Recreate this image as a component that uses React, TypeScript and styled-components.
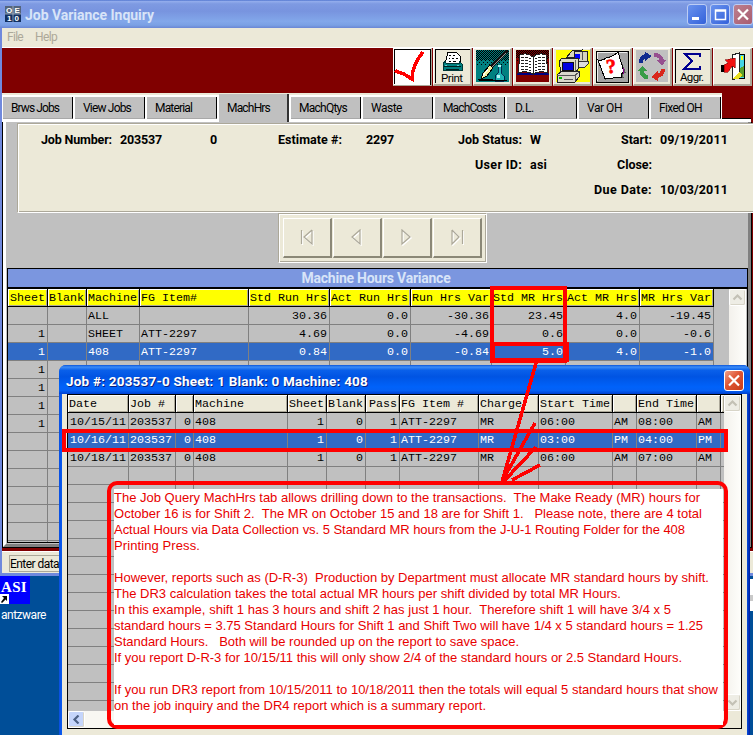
import React, { useLayoutEffect, useRef, useState } from "react";
import styled, { createGlobalStyle, css } from "styled-components";

const BEIGE = "#ece9d8";
const SILVER = "#c0c0c0";
const MAROON = "#800000";

const GlobalStyle = createGlobalStyle`
  * { box-sizing: border-box; }
  body { margin: 0; overflow: hidden; font-family: Roboto, "Liberation Sans", Arial, sans-serif; font-size: 12px; color: #000; }
`;

/* Text whose tracking is adjusted so that it fills a known width */
const FitSpan = styled.span`
  display: inline-block;
  white-space: pre;
`;
function Fit({ w, children }: { w: number; children: string }) {
  const ref = useRef<HTMLSpanElement>(null);
  const [spacing, setSpacing] = useState(0);
  useLayoutEffect(() => {
    const el = ref.current;
    if (!el) return;
    el.style.letterSpacing = "0px";
    setSpacing((w - el.getBoundingClientRect().width) / children.length);
  }, [w, children]);
  return <FitSpan ref={ref} style={{ letterSpacing: `${spacing}px` }}>{children}</FitSpan>;
}

const Desktop = styled.div`
  position: relative;
  width: 753px;
  height: 735px;
  overflow: hidden;
  background: #004e98;
`;

const MainWindow = styled.div`
  width: 760px;
  height: 576px;
  display: flex;
  flex-direction: column;
  background: ${MAROON};
  border-left: 2px solid #7089dd;
  border-bottom: 3px solid #7089dd;
`;

const TitleBar = styled.div`
  height: 28px;
  flex: none;
  margin-left: -2px;
  padding: 4px 5px 0 5px;
  display: flex;
  align-items: flex-start;
  background: linear-gradient(#4268c8 0, #94aeed 4%, #7e9ae2 14%, #7894df 40%, #82a7ea 76%, #7aa0e4 90%, #6a86d4 100%);
`;
const TitleGlyph = styled.svg`
  flex: none;
  margin-top: 2px;
`;
const TitleText = styled.div`
  margin: 3px 0 0 4px;
  width: 662px;
  flex: none;
  color: #d8e4f8;
  font: bold 14px/17px Roboto, sans-serif;
`;
const WindowButton = styled.div<{ $tone: "blue" | "muted" | "red" }>`
  width: 20px;
  height: 21px;
  flex: none;
  margin-right: 3px;
  border: 1px solid ${(p) => (p.$tone === "red" ? "#fff" : "#bccdf5")};
  border-radius: 3px;
  background: ${(p) =>
    p.$tone === "blue" ? "linear-gradient(135deg,#6a93ee,#3361da)" : p.$tone === "muted" ? "linear-gradient(135deg,#bd808f,#a85c70)" : "linear-gradient(135deg,#f0a088,#df5533 45%,#c83c18)"};
  svg { display: block; }
`;

const MenuBar = styled.div`
  height: 20px;
  flex: none;
  display: flex;
  gap: 12px;
  padding: 1px 5px;
  background: ${BEIGE};
  border-bottom: 1px solid #fff;
  color: #aca899;
  font-size: 12px;
  line-height: 17px;
`;

const ToolBar = styled.div`
  height: 45px;
  flex: none;
  display: flex;
  gap: 1px;
  padding-left: 391px;
  background: ${MAROON};
`;
const ToolButton = styled.div`
  width: 39px;
  height: 38px;
  flex: none;
  background: ${BEIGE};
  border: solid;
  border-width: 1px 2px 2px 1px;
  border-color: #fff #aca899 #aca899 #fff;
  svg { display: block; margin: -1px; }
`;

const TabRow = styled.div`
  height: 29px;
  flex: none;
  display: flex;
  background: ${MAROON};
`;
const Tabs = styled.div`
  width: 720px;
  display: flex;
  background: #fff;
  border-top: 2px solid ${BEIGE};
  padding: 0 0 0 1px;
`;
const TabRest = styled.div`
  flex: 1;
  align-self: flex-end;
  height: 4px;
  max-width: 29px;
  background: #fff;
  border-top: 1px solid #000;
`;
const Tab = styled.div<{ $active?: boolean }>`
  width: 70px;
  height: 22px;
  margin: 2px 2px 0 0;
  flex: none;
  padding: 4px 0 0 8px;
  line-height: 15px;
  background: ${SILVER};
  border-right: 1px solid #000;
  border-bottom: 1px solid #a8a8a8;
  ${(p) => p.$active && css`
    height: 28px;
    margin-top: -1px;
    padding-top: 7px;
    border-bottom: 0;
    border-right: 2px solid #333;
  `}
`;

const Page = styled.div`
  height: 426px;
  flex: none;
  width: 750px;
  border-left: 1px solid #000;
  border-right: 1px solid #000;
  border-bottom: 1px solid #000;
`;
const PageFace = styled.div`
  height: 425px;
  background: ${SILVER};
  border-left: 3px solid #fff;
  border-right: 3px solid #808080;
  border-bottom: 3px solid #808080;
  padding-top: 1px;
`;
const Form = styled.div`
  width: 745px;
  height: 90px;
  margin-left: 11px;
  position: relative;
  background: ${BEIGE};
  border: 1px solid #aca899;
  border-bottom-color: #fff;
  box-shadow: inset 1px 1px #fff, inset 0 -1px #aca899;
  padding: 3px 0 0 2px;
`;
const FormRow = styled.div`
  display: grid;
  grid-template-columns: 92px 98px 7px 125px 90px 90px 60px 70px 100px;
  height: 25px;
  align-items: center;
  white-space: nowrap;
  font: bold 12.5px Roboto, sans-serif;
`;
const Label = styled.div`
  text-align: right;
`;
const Value = styled.div<{ $inset?: number }>`
  padding-left: ${(p) => p.$inset ?? 8}px;
`;

const Navigator = styled.div`
  width: 209px;
  height: 50px;
  margin: 0 0 0 272px;
  display: flex;
  gap: 1px;
  padding: 4px 4px;
  background: ${BEIGE};
  border: 1px solid #aca899;
  border-right-color: #fff;
  border-bottom-color: #fff;
  box-shadow: inset 1px 1px #fff, inset -1px -1px #aca899;
`;
const NavButton = styled.div`
  width: 49px;
  height: 40px;
  border: solid;
  border-width: 1px 2px 2px 1px;
  border-color: #fff #8b8877 #8b8877 #fff;
  display: grid;
  place-items: center;
`;

const Browse = styled.div`
  width: 741px;
  height: 275px;
  margin: 5px 0 0 1px;
  border: 1px solid #000;
`;
const BrowseTitle = styled.div`
  height: 20px;
  background: #7b96df;
  border-bottom: 2px solid #000;
  text-align: center;
  color: #d8e4f8;
  font: bold 14px/19px Roboto, sans-serif;
  padding-right: 3px;
`;
const Split = styled.div`
  display: flex;
`;
const MainRows = styled.div`
  width: 721px;
  height: 253px;
  overflow: hidden;
`;
const Row = styled.div<{ $cols: string; $selected?: boolean; $head?: string }>`
  display: grid;
  grid-template-columns: ${(p) => p.$cols};
  width: max-content;
  height: 18px;
  color: ${(p) => (p.$selected ? "#fff" : "#000")};
  background: ${(p) => (p.$selected ? "#316ac5" : SILVER)};
  font: 11.667px/18px "Liberation Mono", "Courier New", monospace;
  ${(p) => p.$head && css`background: ${p.$head};`}
`;
const Cell = styled.div<{ $right?: boolean; $head?: boolean; $pad?: number }>`
  padding: 0 2px 0 ${(p) => p.$pad ?? 1}px;
  white-space: pre;
  overflow: hidden;
  text-align: ${(p) => (p.$right ? "right" : "left")};
  border-right: 1px solid #808080;
  border-bottom: 1px solid #808080;
  ${(p) => p.$head && css`
    border-color: #000;
    box-shadow: inset 1px 1px #fff, inset -1px -1px #aca899;
  `}
`;

const Scroll = styled.div<{ $h: number }>`
  width: 17px;
  height: ${(p) => p.$h}px;
  display: flex;
  flex-direction: column;
  justify-content: space-between;
  background: linear-gradient(90deg, #f3f1ec, #fefefb);
`;
const ScrollButton = styled.div<{ $live?: boolean }>`
  width: 17px;
  height: 17px;
  flex: none;
  display: grid;
  place-items: center;
  border: 1px solid #fff;
  border-radius: 2px;
  box-shadow: inset -1px -1px #d8d5c8;
  background: ${(p) => (p.$live ? "#c5d5fb" : "#eeede5")};
`;

const StatusArea = styled.div`
  height: 25px;
  flex: none;
  padding-top: 3px;
  background: ${MAROON};
`;
const StatusBar = styled.div`
  height: 22px;
  padding: 3px 7px 2px;
  background: ${BEIGE};
  border-top: 1px solid #fff;
`;
const StatusBox = styled.div`
  height: 17px;
  width: 300px;
  border: 1px solid #aca899;
  line-height: 16px;
`;

const Shortcut = styled.div`
  height: 28px;
  width: 30px;
  padding-left: 1px;
  background: #0000ff;
  color: #fff;
  font: bold 15px/22px "Liberation Serif", serif;
  svg { display: block; margin: -4px 0 0 -1px; }
`;
const ShortcutLabel = styled.div`
  padding: 4px 0 0 1px;
  color: #fff;
  font-size: 12px;
  line-height: 15px;
`;

const Popup = styled.div`
  position: absolute;
  left: 59px;
  top: 365px;
  width: 691px;
  height: 380px;
  border-radius: 7px 7px 0 0;
  background: linear-gradient(90deg, #0a4fe0, #0a5cf0 3px, #0a5cf0 687px, #001ea0);
`;
const PopupTitle = styled.div`
  height: 29px;
  padding: 5px 2px 0 7px;
  display: flex;
  border-radius: 7px 7px 0 0;
  color: #fff;
  font: bold 13.5px/22px Roboto, sans-serif;
  text-shadow: 1px 1px #0a1f80;
  background: linear-gradient(#0b55d8 0, #3b8cf8 7%, #0a60ea 18%, #0054e3 40%, #0062fa 75%, #0460f5 88%, #0040cf 100%);
`;
const PopupTitleText = styled.div`
  width: 658px;
`;
const PopupBody = styled.div`
  height: 360px;
  margin: 0 3px;
  padding-left: 5px;
  background: ${BEIGE};
`;
const PopupBrowse = styled.div`
  width: 675px;
  height: 335px;
  border: 1px solid #000;
`;
const PopupRows = styled.div`
  width: 656px;
  height: 316px;
  overflow: hidden;
  background: ${SILVER};
`;
const HScroll = styled.div`
  height: 17px;
  width: 656px;
  display: flex;
  background: #f8f7f2;
`;
const Thumb = styled.div`
  width: 580px;
  margin-left: 44px;
  background: #bcd0fa;
`;

const Note = styled.div`
  position: absolute;
  left: 107px;
  top: 481px;
  width: 621px;
  height: 248px;
  border: 4px solid #ff0000;
  border-radius: 10px;
  padding: 4px 0 0 3px;
`;
const NoteText = styled.div`
  width: 609px;
  height: 236px;
  padding-top: 1px;
  background: #fff;
  color: #e80000;
  font: 13px/16px "Liberation Sans", sans-serif;
`;
const NoteLine = styled.div`
  height: 16px;
`;
const Markup = styled.svg`
  position: absolute;
  left: 0;
  top: 0;
  pointer-events: none;
`;
const EdgeStrip = styled.div`
  position: absolute;
  left: 750px;
  top: 579px;
  width: 3px;
  height: 32px;
  background: linear-gradient(#fff 0 16px, #c9c9c9 16px 22px, #fff 22px);
`;

type Column = { name: string; w: number; right?: boolean; pad?: number };
const mainColumns: Column[] = [
  { name: "Sheet", w: 40, right: true }, { name: "Blank", w: 39, right: true }, { name: "Machine", w: 53 },
  { name: "FG Item#", w: 109 }, { name: "Std Run Hrs", w: 81, right: true }, { name: "Act Run Hrs", w: 81, right: true },
  { name: "Run Hrs Var", w: 81, right: true }, { name: "Std MR Hrs", w: 74, right: true },
  { name: "Act MR Hrs", w: 74, right: true }, { name: "MR Hrs Var", w: 74, right: true },
];
const mainData: string[][] = [
  ["", "", "ALL", "", "30.36", "0.0", "-30.36", "23.45", "4.0", "-19.45"],
  ["1", "", "SHEET", "ATT-2297", "4.69", "0.0", "-4.69", "0.6", "0.0", "-0.6"],
  ["1", "", "408", "ATT-2297", "0.84", "0.0", "-0.84", "5.0", "4.0", "-1.0"],
  ["1"], ["1"], ["1"], ["1"], [], [], [], [], [], [], [],
];
const popupColumns: Column[] = [
  { name: "Date", w: 61, pad: 2 }, { name: "Job #", w: 47 }, { name: "", w: 18, right: true }, { name: "Machine", w: 94 },
  { name: "Sheet", w: 39, right: true }, { name: "Blank", w: 39, right: true }, { name: "Pass", w: 34, right: true },
  { name: "FG Item #", w: 79 }, { name: "Charge", w: 60 }, { name: "Start Time", w: 74 }, { name: "", w: 24 },
  { name: "End Time", w: 60 }, { name: "", w: 24 }, { name: "", w: 4 },
];
const transaction = (day: string, start: string, a: string, end: string) =>
  [day, "203537", "0", "408", "1", "0", "1", "ATT-2297", "MR", start, a, end, a];
const popupData: string[][] = [
  transaction("10/15/11", "06:00", "AM", "08:00"),
  transaction("10/16/11", "03:00", "PM", "04:00"),
  transaction("10/18/11", "06:00", "AM", "07:00"),
  ...Array.from({ length: 14 }, () => []),
];

function Rows({ columns, data, selected, head }: { columns: Column[]; data: string[][]; selected: number; head: string }) {
  const cols = columns.map((c) => `${c.w}px`).join(" ");
  return (
    <>
      <Row $cols={cols} $head={head}>
        {columns.map((c, i) => <Cell key={i} $head $right={c.right}>{c.name}</Cell>)}
      </Row>
      {data.map((r, n) => (
        <Row key={n} $cols={cols} $selected={n === selected}>
          {columns.map((c, i) => <Cell key={i} $right={c.right} $pad={c.pad}>{r[i] ?? ""}</Cell>)}
        </Row>
      ))}
    </>
  );
}

const Chevron = ({ dir, color = "#c3c1b5" }: { dir: "up" | "down" | "left"; color?: string }) => (
  <svg width="11" height="9" viewBox="0 0 11 9" fill="none" stroke={color} strokeWidth="2.2">
    <path d={dir === "up" ? "M1.5 6.5 5.5 2.5 9.5 6.5" : dir === "down" ? "M1.5 2.5 5.5 6.5 9.5 2.5" : "M7.5 .5 3.5 4.5 7.5 8.5"} />
  </svg>
);

const Icon = ({ children }: { children: React.ReactNode }) => (
  <svg width="39" height="38" viewBox="0 0 39 38" shapeRendering="crispEdges">{children}</svg>
);
const Frame = () => <path d="M2.5 35V1.5H37" fill="none" stroke="#000" />;
const Dither = ({ id, bg, h }: { id: string; bg: string; h: number }) => (
  <>
    <defs>
      <pattern id={id} width="2" height="2" patternUnits="userSpaceOnUse"><path d="M0 0h1v1H0zM1 1h1v1H1z" /></pattern>
      <pattern id={id + "s"} width="4" height="4" patternUnits="userSpaceOnUse"><path d="M0 0h1v1H0zM2 2h1v1H2z" /></pattern>
    </defs>
    <path d="M3 2H36V34H3z" fill={bg} />
    <path d={`M3 2H36V${h}H3z`} fill={`url(#${id})`} />
    <path d={`M3 ${h}H36V${h + 5}H3z`} fill={`url(#${id}s)`} />
  </>
);

const CheckIcon = () => (
  <Icon><path d="M1 1H38V37H1z" fill="#fff" /><path d="M37.5 1V36.5M1.5 36V1.5H37" stroke="#000" fill="none" />
    <path d="M2 22.500 Q6 25 10 25.500L19 31Q19 17 30 4" fill="none" stroke="#f00" strokeWidth="3.500" /></Icon>
);
const PrintIcon = () => (
  <Icon><Frame /><path d="M37 2V36H3" stroke="#aca899" fill="none" />
    <path d="M15 4H23L27 8V16H12z" fill="#fff" stroke="#000" /><path d="M16 7h2m2 0h2m-6 3h1m2 0h2m2 0h2m-9 3h2m2 0h3" stroke="#000" />
    <path d="M12 13 10 16V22H29V16L26 13V15H13z" fill="#008080" stroke="#003838" /><path d="M11 18.5H28M13 21.5H26" stroke="#001f1f" /><path d="M12 17h2m10 0h2" stroke="#6cc" />
    <text x="8" y="33.500" fontSize="11.500" textLength="22" fontFamily="Roboto">Print</text></Icon>
);
const PenIcon = () => (
  <Icon><Dither id="pen" bg="#008080" h={12} />
    <path d="M33 2 17 17 19 20 35 4z" fill="#111" /><path d="M33 5 19 19" stroke="#999" />
    <path d="M17 17 10 25 8 31 14 28 20 20z" fill="#f2f0a0" stroke="#000" /><path d="M10 28 15 21" stroke="#fff" />
    <path d="M22 33 23 27 25 25V18H28V25L31 28V33z" fill="#20b5b5" stroke="#003" strokeWidth=".7" /><path d="M25 17h3v2h-3zM24 27h3v3h-3z" fill="#b5f3f3" /><path d="M5 31H20V33H6zM20 32H34V33H20z" /></Icon>
);
const BookIcon = () => (
  <Icon><Dither id="book" bg="#800000" h={10} />
    <path d="M4 25H18L20 27 22 25H36V27H4z" fill="#000080" />
    <path d="M7 7Q14 4 20 9V26Q14 22 5 25z" fill="#fff" stroke="#222" /><path d="M33 7Q26 4 20 9V26Q26 22 35 25z" fill="#fff" stroke="#222" />
    {[10, 13, 16, 19, 22].map((y) => <path key={y} d={`M8 ${y}l4-1 6 2M32 ${y}l-4-1-6 2`} stroke="#222" fill="none" strokeDasharray="3 1" />)}</Icon>
);
const ComputersIcon = () => (
  <Icon><path d="M3 2H37V34H3z" fill="#ff0" />
    <path d="M13 10 19 3 29 2 25 9z" fill="#d9d7bd" stroke="#222" /><path d="M21 3H34V13H21z" fill="#d6d4be" stroke="#222" /><path d="M22 6H27V11H22z" fill="#00f" /><path d="M29 4V12" stroke="#555" />
    <path d="M23 13H35V16L32 19H24z" fill="#ddd" stroke="#333" /><path d="M6 14 9 10H25L26 20 23 24H8z" fill="#deddc4" stroke="#222" />
    <path d="M9 14H20V22H9z" fill="#0000e0" stroke="#111" /><path d="M22 12V23" stroke="#666" />
    <path d="M4 27 9 23H26V29L22 34H4z" fill="#d9d8cb" stroke="#222" /><path d="M4 27.500H22L26 24M22 27V33M11 31h9" stroke="#555" fill="none" /><path d="M6 29h3v2H6z" fill="#0b0" /></Icon>
);
const HelpIcon = () => (
  <Icon><path d="M3 3H35V34H3z" fill="#a4a4a4" stroke="#000" /><path d="M4 33V4H34" stroke="#eee" fill="none" />
    <path d="M10 11 25 5 33 25 29 24 31 30 14 30 12 32 5 12z" fill="#555" /><path d="M5 12Q10 13 13 10Q18 10 25 4L31 24Q27 26 29 29L12 31z" fill="#fff" stroke="#000" /><path d="M30 20v6" stroke="#808" />
    <text x="13" y="25" fontSize="20" fontWeight="bold" fill="#f00" stroke="#f00" strokeWidth=".6" fontFamily="Liberation Serif" transform="rotate(-7 18 18)">?</text></Icon>
);
const CycleIcon = () => (
  <Icon><path d="M3 2H35V34H3z" fill={SILVER} />
    <path d="M8 15Q8 8 14 8" fill="none" stroke="#102a90" strokeWidth="4" /><path d="M12 4 19 8 12 13z" fill="#102a90" />
    <path d="M21 7Q28 7 29 13" fill="none" stroke="#96508f" strokeWidth="4" /><path d="M24 12H33L29 18z" fill="#96508f" />
    <path d="M30 21Q30 27 24 28" fill="none" stroke="#d9261c" strokeWidth="4" /><path d="M25 23V33L18 29z" fill="#d9261c" />
    <path d="M15 29Q9 29 9 23" fill="none" stroke="#3a9c48" strokeWidth="4" /><path d="M4 23 9 18 14 23z" fill="#3a9c48" /></Icon>
);
const AggregateIcon = () => (
  <Icon><Frame /><path d="M37 2V36H3" stroke="#aca899" fill="none" />
    <path d="M26.500 9V5.500H11L19 13 11 21H26.500V17.500" fill="none" stroke="#000090" strokeWidth="2" />
    <text x="7" y="32.500" fontSize="11.500" textLength="24" fontFamily="Roboto">Aggr.</text></Icon>
);
const ExitIcon = () => (
  <Icon><path d="M19 6H31V30H19z" fill="#45d4e5" stroke="#000" /><path d="M27 20 31 18V29H26z" fill="#5aa02c" /><path d="M28 8h2v4h-2z" fill="#ff0" />
    <path d="M19 7 26 5V29L20 32z" fill="#fff" stroke="#222" /><path d="M26 24 30 27 25 31H20" fill="#e8df20" />
    <path d="M8 17H11V24H8z" /><path d="M11 17 15 15 12 12 22 10V20L19 18 15 24H11z" fill="#f01010" stroke="#800" strokeWidth=".6" /></Icon>
);
const tools = [CheckIcon, PrintIcon, PenIcon, BookIcon, ComputersIcon, HelpIcon, CycleIcon, AggregateIcon, ExitIcon];

const tabs: [string, number][] = [
  ["Brws Jobs", 48], ["View Jobs", 48], ["Material", 37], ["MachHrs", 43], ["MachQtys", 48],
  ["Waste", 31], ["MachCosts", 53], ["D.L.", 19], ["Var OH", 35], ["Fixed OH", 43],
];

const navShapes = ["M1.5 1V15M12 1 4 8 12 15V1", "M10 1 2 8 10 15z", "M2 1 10 8 2 15z", "M2 1 9 8 2 15V1M12.5 1V15"];

const noteLines: [string, number][] = [
  ["The Job Query MachHrs tab allows drilling down to the transactions.  The Make Ready (MR) hours for", 586],
  ["October 16 is for Shift 2.  The MR on October 15 and 18 are for Shift 1.   Please note, there are 4 total", 588],
  ["Actual Hours via Data Collection vs. 5 Standard MR hours from the J-U-1 Routing Folder for the 408", 571],
  ["Printing Press.", 86],
  ["", 0],
  ["However, reports such as (D-R-3)  Production by Department must allocate MR standard hours by shift.", 595],
  ["The DR3 calculation takes the total actual MR hours per shift divided by total MR Hours.", 507],
  ["In this example, shift 1 has 3 hours and shift 2 has just 1 hour.  Therefore shift 1 will have 3/4 x 5", 557],
  ["standard hours = 3.75 Standard Hours for Shift 1 and Shift Two will have 1/4 x 5 standard hours = 1.25", 589],
  ["Standard Hours.   Both will be rounded up on the report to save space.", 405],
  ["If you report D-R-3 for 10/15/11 this will only show 2/4 of the standard hours or 2.5 Standard Hours.", 568],
  ["", 0],
  ["If you run DR3 report from 10/15/2011 to 10/18/2011 then the totals will equal 5 standard hours that show", 604],
  ["on the job inquiry and the DR4 report which is a summary report.", 372],
];

export default function App() {
  return (
    <Desktop>
      <GlobalStyle />
      <MainWindow>
        <TitleBar>
          <TitleGlyph width="16" height="16" viewBox="0 0 16 16">
            <path d="M0 0H16V16H0z" fill="#123060" /><path d="M0 0H8V8H0zM8 0H16V8H8z" fill="#53657d" /><path d="M8 0V16M0 8H16" stroke="#aab7c9" strokeWidth=".8" />
            <g fill="#fff" fontSize="8" fontWeight="bold" fontFamily="Liberation Sans"><text x="1" y="7">O</text><text x="9.5" y="7">E</text><text x="2" y="15">1</text><text x="9.5" y="15">0</text></g>
          </TitleGlyph>
          <TitleText><Fit w={129}>Job Variance Inquiry</Fit></TitleText>
          <WindowButton $tone="blue"><svg width="18" height="19"><path d="M4 12H11V15H4z" fill="#fff" /></svg></WindowButton>
          <WindowButton $tone="blue"><svg width="18" height="19"><path d="M4.500 5H14.500V14.500H4.500zM4 6H15" fill="none" stroke="#fff" strokeWidth="1.500" /></svg></WindowButton>
          <WindowButton $tone="muted"><svg width="18" height="19"><path d="M4 4.500 14 14.500M14 4.500 4 14.500" stroke="#fff" strokeWidth="2.200" /></svg></WindowButton>
        </TitleBar>
        <MenuBar><Fit w={16}>File</Fit><Fit w={22}>Help</Fit></MenuBar>
        <ToolBar>{tools.map((T, i) => <ToolButton key={i}><T /></ToolButton>)}</ToolBar>
        <TabRow>
          <Tabs>{tabs.map(([t, w]) => <Tab key={t} $active={t === "MachHrs"}><Fit w={w}>{t}</Fit></Tab>)}</Tabs>
          <TabRest />
        </TabRow>
        <Page>
          <PageFace>
            <Form>
              <FormRow>
                <Label><Fit w={71}>Job Number:</Fit></Label><Value><Fit w={42}>203537</Fit></Value><div>0</div>
                <Label><Fit w={64}>Estimate #:</Fit></Label><Value $inset={24}><Fit w={28}>2297</Fit></Value>
                <Label><Fit w={64}>Job Status:</Fit></Label><Value>W</Value>
                <Label><Fit w={31}>Start:</Fit></Label><Value><Fit w={68}>09/19/2011</Fit></Value>
              </FormRow>
              <FormRow>
                <div /><div /><div /><div /><div />
                <Label><Fit w={47}>User ID:</Fit></Label><Value><Fit w={17}>asi</Fit></Value>
                <Label><Fit w={35}>Close:</Fit></Label><div />
              </FormRow>
              <FormRow>
                <div /><div /><div /><div /><div /><div /><div />
                <Label><Fit w={58}>Due Date:</Fit></Label><Value><Fit w={68}>10/03/2011</Fit></Value>
              </FormRow>
            </Form>
            <Navigator>
              {navShapes.map((d) => (
                <NavButton key={d}>
                  <svg width="14" height="17" viewBox="0 0 14 17" fill="none"><path d={d} stroke="#fff" strokeWidth="1.4" transform="translate(1 1)" /><path d={d} stroke="#aca899" strokeWidth="1.2" /></svg>
                </NavButton>
              ))}
            </Navigator>
            <Browse>
              <BrowseTitle><Fit w={149}>Machine Hours Variance</Fit></BrowseTitle>
              <Split>
                <MainRows><Rows columns={mainColumns} data={mainData} selected={2} head="#ffff00" /></MainRows>
                <Scroll $h={253}><ScrollButton><Chevron dir="up" /></ScrollButton></Scroll>
              </Split>
            </Browse>
          </PageFace>
        </Page>
        <StatusArea><StatusBar><StatusBox><Fit w={49}>Enter data</Fit></StatusBox></StatusBar></StatusArea>
      </MainWindow>
      <Shortcut>
        <Fit w={26}>ASI</Fit>
        <svg width="10" height="10" viewBox="0 0 10 10"><path d="M0 0H9V10H0z" fill="#fff" /><path d="M2 2H7V7L5.5 5.5 2 9 1 8 4 4z" /></svg>
      </Shortcut>
      <ShortcutLabel><Fit w={45}>antzware</Fit></ShortcutLabel>
      <EdgeStrip />

      <Popup>
        <PopupTitle>
          <PopupTitleText><Fit w={302}>Job #: 203537-0 Sheet: 1 Blank: 0 Machine: 408</Fit></PopupTitleText>
          <WindowButton $tone="red"><svg width="18" height="19"><path d="M4 4.500 14 14.500M14 4.500 4 14.500" stroke="#fff" strokeWidth="2.200" /></svg></WindowButton>
        </PopupTitle>
        <PopupBody>
          <PopupBrowse>
            <Split>
              <PopupRows><Rows columns={popupColumns} data={popupData} selected={1} head={BEIGE} /></PopupRows>
              <Scroll $h={316}><ScrollButton><Chevron dir="up" /></ScrollButton><ScrollButton><Chevron dir="down" /></ScrollButton></Scroll>
            </Split>
            <HScroll><ScrollButton $live><Chevron dir="left" color="#4d6185" /></ScrollButton><Thumb /></HScroll>
          </PopupBrowse>
        </PopupBody>
      </Popup>

      <Note><NoteText>{noteLines.map(([t, w], i) => <NoteLine key={i}>{t && <Fit w={w}>{t}</Fit>}</NoteLine>)}</NoteText></Note>
      <Markup width="753" height="735" viewBox="0 0 753 735" fill="none" stroke="#ff0000" strokeWidth="4" shapeRendering="crispEdges">
        <path d="M492 288H565V361H492zM493 344H567V360H493zM64 431H726V450H64z" />
        <path d="M536 363 502 482M535 423 502 481M536 447 504 481M540 465 512 480" strokeWidth="3.500" />
      </Markup>
    </Desktop>
  );
}
